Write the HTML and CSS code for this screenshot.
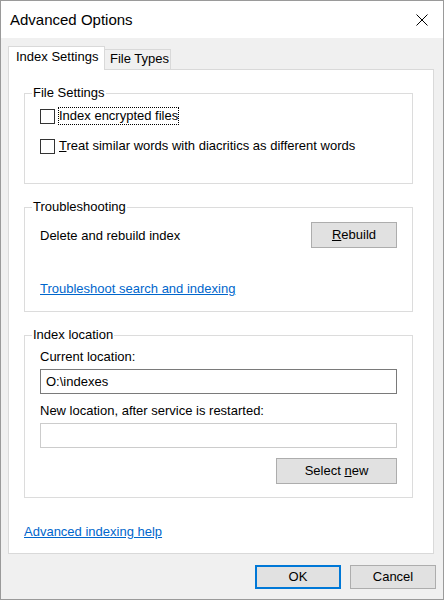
FILE: index.html
```html
<!DOCTYPE html>
<html lang="en">
<head>
<meta charset="utf-8">
<title>Advanced Options</title>
<link rel="stylesheet" href="styles.css">
</head>
<body>
<div class="window">
  <div class="titlebar">
    <span class="title">Advanced Options</span>
    <svg class="close" viewBox="0 0 12 12" width="12" height="12" aria-label="Close">
      <path d="M0.5 0.5 L11.5 11.5 M11.5 0.5 L0.5 11.5" stroke="#000" stroke-width="1" fill="none"/>
    </svg>
  </div>
  <div class="body">
    <div class="tabs">
      <div class="tab active">Index Settings</div>
      <div class="tab">File Types</div>
    </div>
    <div class="panel">
      <fieldset class="group files">
        <legend>File Settings</legend>
        <div class="gbody">
          <div class="check"><span class="box"></span><span class="ctext focus">Index encrypted files</span></div>
          <div class="check"><span class="box"></span><span class="ctext"><u>T</u>reat similar words with diacritics as different words</span></div>
        </div>
      </fieldset>
      <fieldset class="group trouble">
        <legend>Troubleshooting</legend>
        <div class="gbody">
          <div class="row">
            <span>Delete and rebuild index</span>
            <button class="btn" type="button"><u>R</u>ebuild</button>
          </div>
          <a class="trlink" href="#">Troubleshoot search and indexing</a>
        </div>
      </fieldset>
      <fieldset class="group location">
        <legend>Index location</legend>
        <div class="gbody">
          <div class="lbl">Current location:</div>
          <div class="field">O:\indexes</div>
          <div class="lbl lbl2">New location, after service is restarted:</div>
          <div class="field disabled"></div>
          <div class="selrow">
            <button class="btn wide" type="button">Select <u>n</u>ew</button>
          </div>
        </div>
      </fieldset>
      <div class="help"><a href="#">Advanced indexing help</a></div>
    </div>
    <div class="actions">
      <button class="btn ok" type="button">OK</button>
      <button class="btn" type="button">Cancel</button>
    </div>
  </div>
</div>
</body>
</html>
```
FILE: styles.css
```css
* { box-sizing: border-box; }
html, body { margin: 0; padding: 0; }
body {
  font-family: "Liberation Sans", Arial, sans-serif;
  font-size: 13px;
  color: #000;
  background: #fff;
}
.window {
  width: 444px;
  height: 600px;
  border: 1px solid #9a9a9a;
  background: #f0f0f0;
  display: flex;
  flex-direction: column;
}
.titlebar {
  height: 37px;
  flex: none;
  background: #fff;
  display: flex;
  align-items: center;
  justify-content: space-between;
  padding-left: 9px;
  padding-right: 15px;
}
.title { font-size: 15px; line-height: 18px; }
.close { display: block; width: 12px; height: 12px; }
.body { padding: 8px 9px 0 7px; }
.tabs {
  display: flex;
  align-items: flex-end;
  height: 23px;
}
.tab {
  height: 20px;
  width: 67px;
  margin-left: -1px;
  padding: 1px 0 0 5px;
  line-height: 16px;
  border: 1px solid #d9d9d9;
  border-bottom: 0;
  background: #f0f0f0;
  white-space: nowrap;
}
.tab.active {
  position: relative;
  z-index: 1;
  height: 24px;
  width: 97px;
  margin: 0 0 -1px 0;
  padding: 2px 0 0 7px;
  background: #fff;
}
.panel {
  background: #fff;
  border: 1px solid #d9d9d9;
  padding: 15px 20px 13px 15px;
}
.group {
  margin: 0;
  padding: 0 15px 0 7px;
  border: 1px solid #dcdcdc;
  min-width: 0;
}
.group + .group { margin-top: 15px; }
.group legend {
  padding: 0 1px;
  line-height: 16px;
}
.gbody { padding-left: 8px; }
.files .gbody { padding-top: 6px; padding-bottom: 28px; }
.check {
  display: flex;
  align-items: center;
  height: 18px;
}
.check + .check { margin-top: 12px; }
.box {
  flex: none;
  width: 15px;
  height: 15px;
  border: 1px solid #333;
  background: #fff;
  margin-right: 3px;
}
.ctext {
  border: 1px dotted transparent;
  line-height: 16px;
  white-space: nowrap;
}
.ctext.focus { border-color: #000; }
.trouble .gbody { padding-top: 7px; padding-bottom: 14px; }
.row {
  display: flex;
  align-items: center;
  justify-content: space-between;
  height: 26px;
}
.btn {
  font-family: inherit;
  font-size: 13px;
  color: #000;
  height: 26px;
  width: 86px;
  padding: 0;
  background: #e1e1e1;
  border: 1px solid #adadad;
  border-radius: 0;
  text-align: center;
  line-height: 16px;
}
.btn.wide { width: 121px; }
a { color: #0066cc; text-decoration: underline; }
.trlink {
  display: inline-block;
  margin-top: 33px;
  line-height: 16px;
}
.location .gbody { padding-top: 6px; padding-bottom: 13px; }
.lbl { line-height: 16px; }
.lbl2 { margin-top: 9px; }
.field {
  height: 25px;
  margin-top: 4px;
  border: 1px solid #7a7a7a;
  background: #fff;
  padding-left: 5px;
  line-height: 23px;
}
.field.disabled { border-color: #cccccc; }
.selrow {
  display: flex;
  justify-content: flex-end;
  margin-top: 10px;
}
.help {
  margin-top: 26px;
  line-height: 16px;
}
.actions {
  display: flex;
  justify-content: flex-end;
  gap: 9px;
  margin-top: 11px;
  margin-right: -2px;
}
.actions .btn { height: 24px; }
.btn.ok { border: 2px solid #0078d7; }
```
